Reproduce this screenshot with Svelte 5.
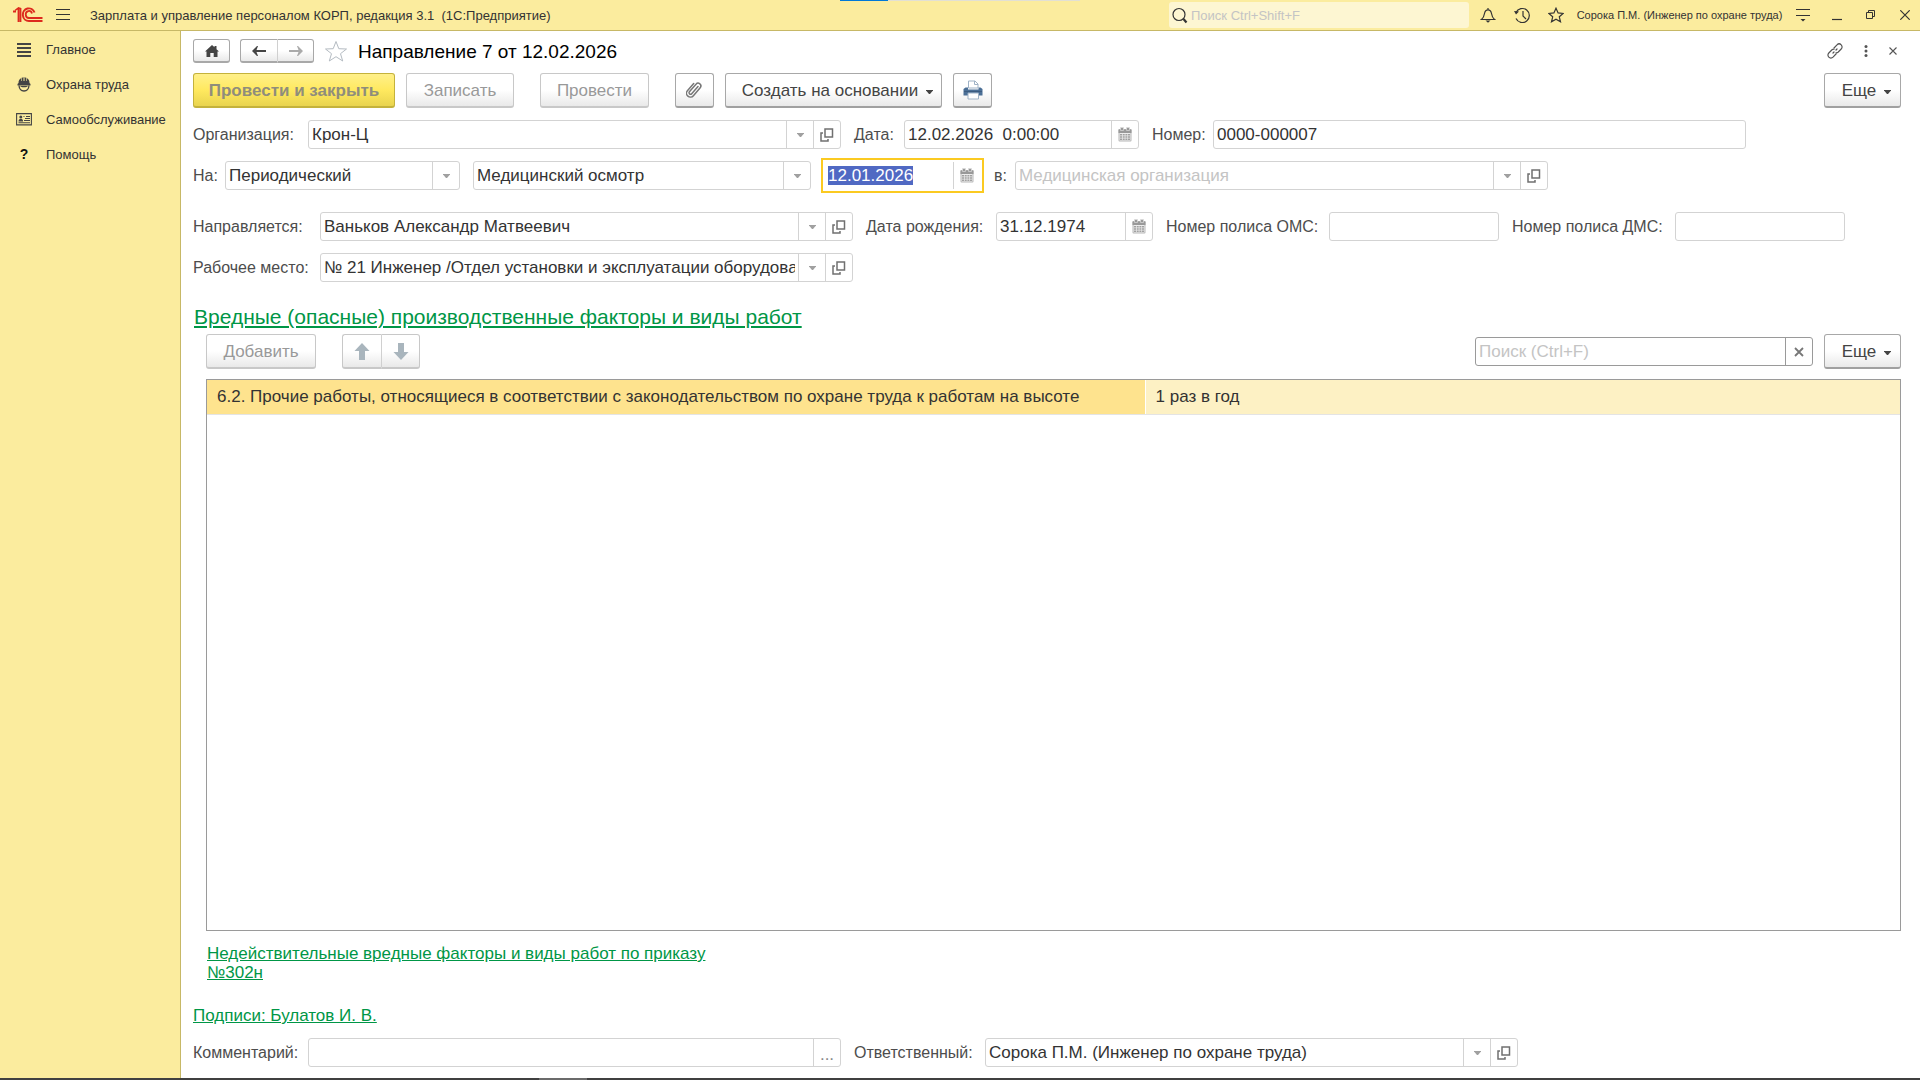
<script lang="ts">
	import { onMount } from 'svelte';

	let organization = $state('Крон-Ц');
	let docDate = $state('12.02.2026  0:00:00');
	let docNumber = $state('0000-000007');
	let kind = $state('Периодический');
	let purpose = $state('Медицинский осмотр');
	let examDate = $state('12.01.2026');
	let clinic = $state('');
	let employee = $state('Ваньков Александр Матвеевич');
	let birthDate = $state('31.12.1974');
	let oms = $state('');
	let dms = $state('');
	let workplace = $state('№ 21 Инженер /Отдел установки и эксплуатации оборудования');
	let comment = $state('');
	let responsible = $state('Сорока П.М. (Инженер по охране труда)');
	let search = $state('');
	let globalSearch = $state('');

	const sections = [
		{ icon: 'list', title: 'Главное' },
		{ icon: 'helmet', title: 'Охрана труда' },
		{ icon: 'card', title: 'Самообслуживание' },
		{ icon: 'help', title: 'Помощь' },
	];

	const factors = [
		{
			name: '6.2. Прочие работы, относящиеся в соответствии с законодательством по охране труда к работам на высоте',
			period: '1 раз в год',
		},
	];

	let examInput: HTMLInputElement;

	onMount(() => {
		examInput.focus();
		examInput.select();
	});
</script>

{#snippet caret()}
	<svg width="7" height="4" viewBox="0 0 7 4"><path d="M0 0h7v.5L4 4H3L0 .5z" fill="currentColor" /></svg>
{/snippet}

{#snippet dropButton()}
	<button type="button" class="field-btn drop" aria-label="Выбрать">{@render caret()}</button>
{/snippet}

{#snippet openButton()}
	<button type="button" class="field-btn" aria-label="Открыть">
		<svg width="14" height="14" viewBox="0 0 14 14" fill="none" stroke="#707070" stroke-width="1.5">
			<path d="M5 1h7.5v8H5zM3 5H1v8h7v-2" />
		</svg>
	</button>
{/snippet}

{#snippet calendarButton()}
	<button type="button" class="field-btn" aria-label="Календарь">
		<svg width="14" height="15" viewBox="0 0 14 15">
			<rect x=".5" y="2" width="13" height="12.500" rx="1" fill="#b8b8b8" />
			<path d="M.5 2.500h13V6H.5z" fill="#999" />
			<path d="M1.500 6h11v7.500h-11z" fill="#ededed" />
			<path d="M2 7h2v1.500H2zM4.700 7h2v1.500h-2zM7.400 7h2v1.500h-2zM10 7h2v1.500h-2zM2 9.200h2v1.500H2zM4.700 9.200h2v1.500h-2zM7.400 9.200h2v1.500h-2zM10 9.200h2v1.500h-2zM2 11.400h2v1.500H2zM4.700 11.400h2v1.500h-2zM7.400 11.400h2v1.500h-2zM10 11.400h2v1.500h-2z" fill="#a0a0a0" />
			<path d="M2.500 .5h3v3h-3zM8.500 .5h3v3h-3z" fill="#999" stroke="#ddd" stroke-width=".7" />
		</svg>
	</button>
{/snippet}

<div class="app">
	<header class="app-header">
		<svg class="logo" width="30" height="16" viewBox="0 0 30 16" fill="none" stroke="#dd2a1e">
			<path d="M0 4.500h3M5.500 1v14M7.500 1v14M4 2l3.500-1" stroke-width="1.800" />
			<path d="M2 3.500l4-3" stroke-width="1.500" />
			<path d="M21.500 5.500A6 6.300 0 1 0 16 14h13.500" stroke-width="2" />
			<path d="M19 6.500A3.200 3.500 0 1 0 16 11h13.500" stroke-width="1.800" />
		</svg>
		<button type="button" class="head-btn menu-btn" aria-label="Меню">
			<svg width="14" height="12" viewBox="0 0 14 12"><path d="M0 .5h14M0 5.500h14M0 10.500h14" stroke="#333" /></svg>
		</button>
		<span class="app-title">Зарплата и управление персоналом КОРП, редакция 3.1&nbsp; (1С:Предприятие)</span>
		<div class="progress"><span></span></div>
		<div class="global-search">
			<svg width="17" height="17" viewBox="0 0 17 17" fill="none" stroke="#333">
				<circle cx="7" cy="7.500" r="6" stroke-width="1.200" />
				<path d="M11.500 12l3 3.500" stroke-width="2.200" />
			</svg>
			<input type="text" placeholder="Поиск Ctrl+Shift+F" aria-label="Поиск" bind:value={globalSearch} />
		</div>
		<div class="head-actions">
			<button type="button" class="head-btn" aria-label="Уведомления">
				<svg width="16" height="16" viewBox="0 0 16 16" fill="none" stroke="#333" stroke-width="1.200">
					<path d="M1.500 12.500h13c-2-1.500-2.500-3-3-6C11 4 10.200 2.800 8 2.800S5 4 4.500 6.500c-.5 3-1 4.500-3 6zM8 1v1.800" />
					<path d="M5.500 13.500h5L8 15.800z" fill="#333" stroke="none" />
				</svg>
			</button>
			<button type="button" class="head-btn" aria-label="История">
				<svg width="17" height="17" viewBox="0 0 17 17" fill="none" stroke="#333" stroke-width="1.200">
					<path d="M2 5.500A7 7 0 1 1 2 11.500M9 4v5l3 3" />
					<path d="M0 4l5 .5-3 3z" fill="#333" stroke="none" />
				</svg>
			</button>
			<button type="button" class="head-btn" aria-label="Избранное">
				<svg width="16" height="16" viewBox="0 0 16 16" fill="none" stroke="#333" stroke-width="1.200">
					<path d="M8 1.200l2.100 4.700 5 .5-3.800 3.400 1.200 5L8 12.200l-4.500 2.600 1.200-5L.9 6.400l5-.5z" />
				</svg>
			</button>
			<span class="user">Сорока П.М. (Инженер по охране труда)</span>
			<button type="button" class="head-btn" aria-label="Настройки">
				<svg width="14" height="14" viewBox="0 0 14 14"><path d="M0 1.500h14M0 7.500h14" stroke="#333" /><path d="M4.500 11h5L7 13.500z" fill="#333" /></svg>
			</button>
			<button type="button" class="head-btn" aria-label="Свернуть">
				<svg width="10" height="12" viewBox="0 0 10 12"><path d="M0 10.500h10" stroke="#333" stroke-width="1.200" /></svg>
			</button>
			<button type="button" class="head-btn" aria-label="Развернуть">
				<svg width="10" height="10" viewBox="0 0 10 10" fill="none" stroke="#333"><path d="M.5 2.500h6v6h-6zM2.500 2.500v-2h6v6h-2" /></svg>
			</button>
			<button type="button" class="head-btn" aria-label="Закрыть программу">
				<svg width="10" height="10" viewBox="0 0 10 10"><path d="M.3 .3l9.400 9.400M9.700 .3L.3 9.700" stroke="#333" stroke-width="1.200" /></svg>
			</button>
		</div>
	</header>

	<div class="body">
		<nav class="sidebar">
			{#each sections as section}
				<a href="#{section.icon}" class="section">
					<span class="section-icon">
						{#if section.icon === 'list'}
							<svg width="14" height="14" viewBox="0 0 14 14"><path d="M0 1h14M0 5h14M0 9h14M0 13h14" stroke="#444" stroke-width="2" /></svg>
						{:else if section.icon === 'helmet'}
							<svg width="14" height="15" viewBox="0 0 14 15">
								<path d="M1.500 6C1.500 3.500 2.500 2 4 1.300V4l.6-.1V.8L6 .5v3.400h.5V.3h1v3.600H8V.5l1.400.3v3.100l.6.1V1.300C11.500 2 12.500 3.500 12.500 6l1 1v1.500H.5V7z" fill="#444" />
								<path d="M2 8.500c.3 3.500 2 5.500 5 5.500s4.700-2 5-5.500" fill="none" stroke="#444" stroke-width="1.300" />
								<path d="M3 9h8c-.8 1-2 1.300-4 1.300S3.800 10 3 9z" fill="#444" />
							</svg>
						{:else if section.icon === 'card'}
							<svg width="16" height="13" viewBox="0 0 16 13">
								<path d="M.6 .6h14.800v11.300H.6zM7.500 3.500h1M10 3.500h4M9 5.500h5M8 7.500h6M2.500 9.800H14" fill="none" stroke="#444" stroke-width="1.100" />
								<circle cx="4.800" cy="4" r="1.500" fill="#444" />
								<path d="M2.500 8.500c0-2 1-2.500 2.300-2.500s2.300.5 2.300 2.500z" fill="#444" />
							</svg>
						{:else}
							<b>?</b>
						{/if}
					</span>
					{section.title}
				</a>
			{/each}
		</nav>

		<main class="page">
			<div class="titlebar">
				<button type="button" class="btn nav-btn" aria-label="Начальная страница">
					<svg width="14" height="12" viewBox="0 0 14 12"><path d="M7 0l2.500 2.300V1h2v3.200L14 6.500h-1.500V12H8.700V8H5.300v4H1.500V6.500H0z" fill="#444" /></svg>
				</button>
				<div class="btn-pair">
					<button type="button" class="btn nav-btn" aria-label="Назад">
						<svg width="14" height="10" viewBox="0 0 14 10"><path d="M0 5l5-5h1L4.500 4H14v2H4.500L6 10H5z" fill="#444" /></svg>
					</button>
					<button type="button" class="btn nav-btn" aria-label="Вперед" disabled>
						<svg width="14" height="10" viewBox="0 0 14 10"><path d="M14 5L9 0H8l1.500 4H0v2h9.500L8 10h1z" fill="#aaa" /></svg>
					</button>
				</div>
				<button type="button" class="plain-btn" aria-label="В избранное">
					<svg width="24" height="22" viewBox="0 0 24 22" fill="none" stroke="#b4bbc2">
						<path d="M12 1.500l2.800 7.200 7.700.3-6 4.700 2.200 7.300L12 16.700 5.300 21l2.200-7.300-6-4.700 7.700-.3z" />
					</svg>
				</button>
				<h1>Направление 7 от 12.02.2026</h1>
				<div class="page-tools">
					<button type="button" class="plain-btn" aria-label="Ссылка">
						<svg width="16" height="16" viewBox="0 0 16 16" fill="none" stroke="#555" stroke-width="1.200" stroke-linecap="round">
							<path d="M7 5l3-3.200a2.900 2.900 0 0 1 4.200 4.200L11 9.200c-.6.5-1.300.7-2 .6M9 11l-3 3.200A2.900 2.900 0 0 1 1.800 10L5 6.800c.6-.5 1.300-.7 2-.6M6 10l1-1M9 7l1-1" />
						</svg>
					</button>
					<button type="button" class="plain-btn" aria-label="Действия">
						<svg width="4" height="12" viewBox="0 0 4 12" fill="#555"><circle cx="2" cy="1.600" r="1.500" /><circle cx="2" cy="6" r="1.500" /><circle cx="2" cy="10.400" r="1.500" /></svg>
					</button>
					<button type="button" class="plain-btn" aria-label="Закрыть">
						<svg width="8" height="8" viewBox="0 0 8 8"><path d="M.5 .5l7 7M7.500 .5l-7 7" stroke="#555" stroke-width="1.100" /></svg>
					</button>
				</div>
			</div>

			<div class="toolbar">
				<button type="button" class="btn primary" disabled>Провести и закрыть</button>
				<button type="button" class="btn write" disabled>Записать</button>
				<button type="button" class="btn post" disabled>Провести</button>
				<button type="button" class="btn square" aria-label="Присоединенные файлы">
					<svg width="17" height="18" viewBox="0 0 17 18" fill="none" stroke="#777" stroke-width="1.500" stroke-linecap="round">
						<path d="M12 5.500l-6.300 7.200a1.500 1.500 0 0 1-2.300-2L10 3.200a2.700 2.700 0 0 1 4.200 3.500l-6.800 8a3.900 3.900 0 0 1-6-5L7.700 2.500" />
					</svg>
				</button>
				<button type="button" class="btn create">Создать на основании {@render caret()}</button>
				<button type="button" class="btn square" aria-label="Печать">
					<svg width="20" height="20" viewBox="0 0 20 20">
						<path d="M5.500 8V1H12l3 3v4z" fill="#fff" stroke="#9fb2c6" />
						<path d="M11.500 1v3.500H15" fill="none" stroke="#9fb2c6" />
						<path d="M2.500 7.500H5v2h10.500v-2h2L19.500 9v6.500H.5V9z" fill="#4b6f96" />
						<path d="M1 11.500h18" stroke="#3c5c80" />
						<path d="M5 13h10.500v6H5z" fill="#fff" stroke="#9fb2c6" />
					</svg>
				</button>
				<button type="button" class="btn more">Еще {@render caret()}</button>
			</div>

			<form class="form" onsubmit={(e) => e.preventDefault()}>
				<div class="row row-org">
					<label for="organization">Организация:</label>
					<div class="field">
						<input id="organization" type="text" bind:value={organization} />
						{@render dropButton()}
						{@render openButton()}
					</div>
					<label for="doc-date">Дата:</label>
					<div class="field">
						<input id="doc-date" class="pre" type="text" bind:value={docDate} />
						{@render calendarButton()}
					</div>
					<label for="doc-number">Номер:</label>
					<div class="field"><input id="doc-number" type="text" bind:value={docNumber} /></div>
				</div>

				<div class="row row-kind">
					<label for="kind">На:</label>
					<div class="field">
						<select id="kind" bind:value={kind}>
							<option>Периодический</option>
							<option>Предварительный</option>
						</select>
						<span class="field-btn drop">{@render caret()}</span>
					</div>
					<div class="field apart">
						<select aria-label="Вид осмотра" bind:value={purpose}>
							<option>Медицинский осмотр</option>
						</select>
						<span class="field-btn drop">{@render caret()}</span>
					</div>
					<div class="field apart active">
						<input type="text" aria-label="Дата осмотра" bind:this={examInput} bind:value={examDate} />
						{@render calendarButton()}
					</div>
					<label for="clinic">в:</label>
					<div class="field">
						<input id="clinic" type="text" placeholder="Медицинская организация" bind:value={clinic} />
						{@render dropButton()}
						{@render openButton()}
					</div>
				</div>

				<div class="row row-person">
					<label for="employee">Направляется:</label>
					<div class="field">
						<input id="employee" type="text" bind:value={employee} />
						{@render dropButton()}
						{@render openButton()}
					</div>
					<label for="birth-date">Дата рождения:</label>
					<div class="field">
						<input id="birth-date" type="text" bind:value={birthDate} />
						{@render calendarButton()}
					</div>
					<label for="oms">Номер полиса ОМС:</label>
					<div class="field"><input id="oms" type="text" bind:value={oms} /></div>
					<label for="dms">Номер полиса ДМС:</label>
					<div class="field"><input id="dms" type="text" bind:value={dms} /></div>
				</div>

				<div class="row row-person">
					<label for="workplace">Рабочее место:</label>
					<div class="field">
						<input id="workplace" type="text" bind:value={workplace} />
						{@render dropButton()}
						{@render openButton()}
					</div>
				</div>
			</form>

			<h2><a href="#factors">Вредные (опасные) производственные факторы и виды работ</a></h2>

			<section class="factors">
				<div class="toolbar">
					<button type="button" class="btn add" disabled>Добавить</button>
					<div class="btn-pair move">
						<button type="button" class="btn square" aria-label="Переместить вверх" disabled>
							<svg width="16" height="17" viewBox="0 0 16 17"><path d="M8 0l7.500 8H11v9H5V8H.5z" fill="#a9b5bd" /></svg>
						</button>
						<button type="button" class="btn square" aria-label="Переместить вниз" disabled>
							<svg width="16" height="17" viewBox="0 0 16 17"><path d="M8 17l7.500-8H11V0H5v9H.5z" fill="#a9b5bd" /></svg>
						</button>
					</div>
					<div class="field list-search">
						<input type="text" placeholder="Поиск (Ctrl+F)" aria-label="Поиск по списку" bind:value={search} />
						<button type="button" class="field-btn" aria-label="Очистить" onclick={() => (search = '')}>
							<svg width="10" height="10" viewBox="0 0 10 10"><path d="M1 1l8 8M9 1L1 9" stroke="#777" stroke-width="1.800" /></svg>
						</button>
					</div>
					<button type="button" class="btn more">Еще {@render caret()}</button>
				</div>

				<div class="list">
					<table>
						<tbody>
							{#each factors as factor}
								<tr>
									<td class="name">{factor.name}</td>
									<td>{factor.period}</td>
								</tr>
							{/each}
						</tbody>
					</table>
				</div>

				<p class="old-factors"><a href="#old">Недействительные вредные факторы и виды работ по приказу №302н</a></p>
			</section>

			<p class="signatures"><a href="#signatures">Подписи: Булатов И. В.</a></p>

			<div class="row row-footer">
				<label for="comment">Комментарий:</label>
				<div class="field">
					<input id="comment" type="text" bind:value={comment} />
					<button type="button" class="field-btn dots" aria-label="Открыть комментарий">...</button>
				</div>
				<label for="responsible">Ответственный:</label>
				<div class="field">
					<input id="responsible" type="text" bind:value={responsible} />
					{@render dropButton()}
					{@render openButton()}
				</div>
			</div>
		</main>
	</div>

	<div class="taskbar"><span></span></div>
</div>

<style>
	:global(body) {
		margin: 0;
	}

	.app,
	.app * {
		box-sizing: border-box;
	}

	.app {
		display: flex;
		flex-direction: column;
		min-height: 100vh;
		background: #fff;
		color: #333;
		font-family: 'Liberation Sans', Arial, sans-serif;
		font-size: 17px;
		line-height: 19px;
	}

	button,
	input,
	select {
		font: inherit;
		color: inherit;
		margin: 0;
	}

	svg {
		display: block;
		flex: none;
	}

	/* header */
	.app-header {
		position: relative;
		display: flex;
		align-items: center;
		height: 31px;
		padding-left: 13px;
		background: #fbec9e;
		border-bottom: 1px solid #c7b866;
	}

	.head-btn,
	.plain-btn {
		display: flex;
		align-items: center;
		justify-content: center;
		padding: 0;
		border: none;
		background: none;
	}

	.head-btn {
		width: 30px;
		height: 26px;
	}

	.menu-btn {
		margin-left: 5px;
	}

	.app-title {
		flex: 1;
		margin-left: 12px;
		font-size: 13px;
		white-space: nowrap;
	}

	.progress {
		position: absolute;
		top: 0;
		left: 840px;
		width: 240px;
		height: 1px;
		background: #e2e0d4;
	}

	.progress span {
		display: block;
		width: 48px;
		height: 1px;
		background: #0078d7;
	}

	.global-search {
		display: flex;
		align-items: center;
		gap: 2px;
		width: 300px;
		height: 26px;
		padding: 0 3px;
		border-radius: 3px;
		background: #fdf6d2;
	}

	.global-search input {
		flex: 1;
		min-width: 0;
		padding: 0;
		border: none;
		outline: none;
		background: none;
		font-size: 13px;
	}

	input::placeholder {
		color: #c4c4c4;
		opacity: 1;
	}

	.head-actions {
		display: flex;
		align-items: center;
		gap: 4px;
		margin-left: 4px;
	}

	.user {
		width: 209px;
		font-size: 11px;
		text-align: center;
		white-space: nowrap;
	}

	/* body */
	.body {
		display: flex;
		flex: 1;
	}

	.sidebar {
		flex: none;
		width: 181px;
		padding-top: 1px;
		background: #fbec9e;
		border-right: 1px solid #c7b866;
	}

	.section {
		display: flex;
		align-items: center;
		height: 35px;
		padding-left: 14px;
		color: #333;
		font-size: 13px;
		text-decoration: none;
	}

	.section-icon {
		display: flex;
		justify-content: center;
		width: 20px;
		margin-right: 12px;
	}

	.section-icon b {
		font-size: 14px;
		color: #111;
	}

	.page {
		display: flex;
		flex: 1;
		flex-direction: column;
		min-width: 0;
		padding: 8px 19px 11px 12px;
	}

	.titlebar {
		display: flex;
		align-items: center;
		height: 24px;
	}

	h1 {
		margin: 0 0 0 10px;
		color: #000;
		font-size: 19px;
		font-weight: 400;
	}

	.page-tools {
		display: flex;
		gap: 21px;
		margin-left: auto;
		padding-right: 4px;
	}

	.titlebar .btn-pair {
		margin: 0 10px;
	}

	.btn {
		display: flex;
		align-items: center;
		justify-content: center;
		height: 35px;
		padding: 0;
		border: 1px solid #a8a8a8;
		border-bottom: 2px solid #a0a0a0;
		border-radius: 3px;
		background: linear-gradient(#fff 50%, #e9e9e9);
		color: #444;
		white-space: nowrap;
	}

	.btn:disabled {
		border-color: #c8c8c8;
		color: #999;
	}

	.nav-btn,
	.nav-btn:disabled {
		width: 37px;
		height: 24px;
		border-color: #a8a8a8;
	}

	.btn-pair {
		display: flex;
	}

	.btn-pair .btn:first-child {
		border-right: none;
		border-radius: 3px 0 0 3px;
	}

	.btn-pair .btn:last-child {
		border-left-color: #d0d0d0;
		border-radius: 0 3px 3px 0;
	}

	.toolbar {
		display: flex;
		align-items: center;
		margin-top: 10px;
	}

	.primary,
	.primary:disabled {
		width: 202px;
		border-color: #c4b23c;
		background: linear-gradient(#fff08a, #ffe95f 50%, #e9d44f);
		color: #8f8d7c;
		font-weight: 700;
	}

	.write {
		width: 108px;
		margin: 0 26px 0 11px;
	}

	.post {
		width: 109px;
		margin-right: 26px;
	}

	.square {
		width: 39px;
	}

	.create {
		gap: 8px;
		width: 217px;
		margin: 0 11px;
		padding-left: 8px;
	}

	.more {
		gap: 8px;
		width: 77px;
		margin-left: auto;
		padding-left: 8px;
	}

	.create svg,
	.more svg {
		margin-top: 4px;
	}

	/* form */
	.form {
		display: flex;
		flex-direction: column;
		gap: 12px;
		margin-top: 12px;
	}

	.row {
		display: grid;
		align-items: center;
	}

	.row-org {
		grid-template-columns: 115px minmax(0, 533px) 63px minmax(0, 235px) 74px minmax(0, 533px);
	}

	.row-kind {
		grid-template-columns: 32px minmax(0, 235px) minmax(0, 351px) minmax(0, 170px) 34px minmax(0, 533px);
		margin-bottom: 10px;
	}

	.row-person {
		grid-template-columns: 127px minmax(0, 533px) 143px minmax(0, 157px) 176px minmax(0, 170px) 176px minmax(0, 170px);
	}

	.row-footer {
		grid-template-columns: 115px minmax(0, 533px) 144px minmax(0, 533px);
		margin-top: 13px;
	}

	label {
		color: #4d4d4d;
		font-size: 16px;
		white-space: nowrap;
	}

	.field + label {
		padding-left: 13px;
	}

	.field {
		display: flex;
		height: 29px;
		border: 1px solid #d3d3d3;
		border-radius: 3px;
		background: #fff;
	}

	.field.apart {
		margin-left: 13px;
	}

	.field.active {
		border-color: #fff;
		border-radius: 0;
		outline: 2px solid #fbca21;
		outline-offset: 1px;
	}

	.field input,
	.field select {
		flex: 1;
		min-width: 0;
		padding: 0 3px;
		border: none;
		border-radius: 3px;
		outline: none;
		background: none;
		appearance: none;
	}

	.field .pre {
		white-space: pre;
	}

	.field input::selection {
		background: #5069c3;
		color: #fff;
	}

	.field-btn {
		display: flex;
		flex: none;
		align-items: center;
		justify-content: center;
		width: 27px;
		padding: 0;
		border: none;
		border-left: 1px solid #d3d3d3;
		background: none;
		color: #777;
	}

	.drop {
		color: #a0a0a0;
	}

	.dots {
		padding-top: 4px;
		color: #888;
	}

	/* factors */
	h2 {
		margin: 23px 0 0 1px;
		font-size: 21px;
		font-weight: 400;
		line-height: 24px;
	}

	.page a {
		color: #009646;
	}

	.factors {
		display: flex;
		flex: 1;
		flex-direction: column;
		padding-left: 13px;
	}

	.factors .toolbar {
		margin-top: 5px;
	}

	.add {
		width: 110px;
	}

	.move {
		margin-left: 26px;
	}

	.list-search {
		width: 338px;
		margin-left: auto;
		border-color: #9a9a9a;
	}

	.list-search .field-btn {
		border-color: #9a9a9a;
	}

	.list-search + .more {
		margin-left: 11px;
	}

	.list {
		flex: 1;
		margin-top: 10px;
		border: 1px solid #9a9a9a;
	}

	table {
		width: 100%;
		border-collapse: collapse;
	}

	td {
		height: 34px;
		padding: 0 10px;
		border-bottom: 1px solid #e4e4e4;
		background: #fdf1c4;
		white-space: nowrap;
	}

	td.name {
		width: 938px;
		background: #fee38e;
		border-right: 1px solid #fff;
	}

	p {
		margin: 0;
	}

	.old-factors {
		max-width: 520px;
		margin-top: 13px;
		padding-left: 1px;
	}

	.signatures {
		margin-top: 24px;
	}

	.taskbar {
		height: 2px;
		background: #404040;
	}

	.taskbar span {
		display: block;
		width: 48px;
		height: 2px;
		margin-left: 539px;
		background: #6b6b6b;
	}
</style>
